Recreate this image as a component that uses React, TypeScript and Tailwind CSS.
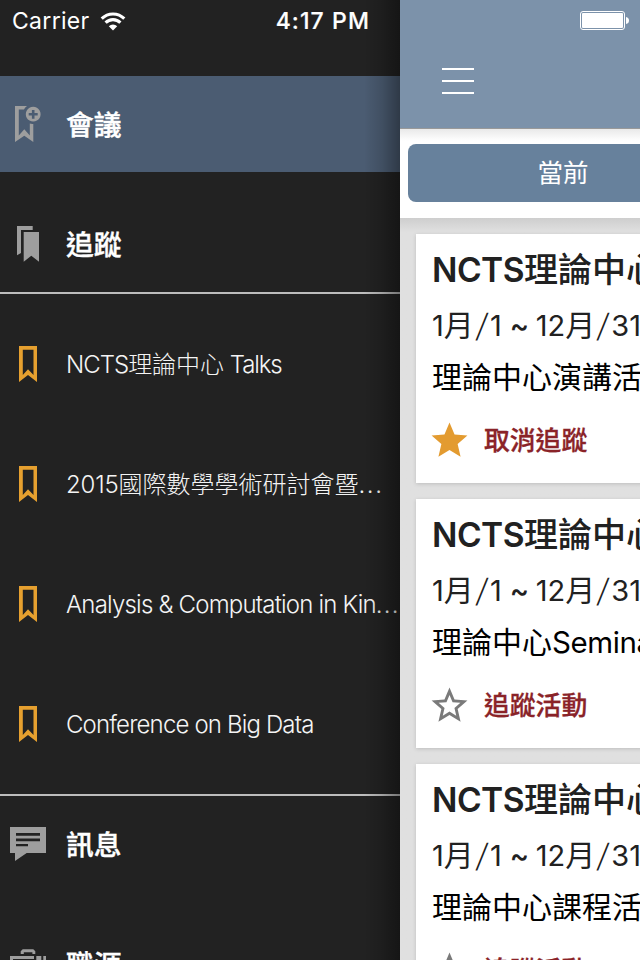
import React from "react";

const ui = "font-[Inter,'Noto_Sans_CJK_TC',sans-serif]";

function MeetingIcon() {
  return (
    <svg className="size-12 shrink-0" viewBox="0 0 48 48" fill="#9e9e9e">
      <path d="M11 6H23Q20.6 7.6 20 9.6H14.8V35.5L20.3 29.3L25.8 35.5V23.6Q27.5 24.3 29.3 24V42L20.3 35.7L11 42Z" />
      <path fillRule="evenodd" d="M29.2 6.8a7.4 7.4 0 1 0 .01 0ZM27.9 10h2.6v3h3.2v2.6h-3.2v3.2h-2.6v-3.2h-3.2V13h3.2Z" />
    </svg>
  );
}

function FollowIcon() {
  return (
    <svg className="size-12 shrink-0" viewBox="0 0 48 48" fill="#9e9e9e">
      <path d="M13 6H28.7V10H17V33L13 35.3Z" />
      <path d="M19.7 12H35V41.8L27.3 35.7L19.7 41.8Z" />
    </svg>
  );
}

function BookmarkIcon() {
  return (
    <svg className="size-12 shrink-0" viewBox="0 0 48 48" fill="#e6a02f">
      <path fillRule="evenodd" d="M15 6H33V42L24 35L15 42ZM18.8 9.8V35L24 29.3L29.5 35V9.8Z" />
    </svg>
  );
}

function MessageIcon() {
  return (
    <svg className="size-12 shrink-0" viewBox="0 0 48 48">
      <path fill="#9e9e9e" d="M6 7H42V33H22.7L11 41V33H6Z" />
      <path fill="#222" d="M12 13H36V15.7H12ZM12 18.6H36V21.3H12ZM12 24H24V26.3H12Z" />
    </svg>
  );
}

function JobIcon() {
  return (
    <svg className="size-12 shrink-0" viewBox="0 0 48 48" fill="#9e9e9e">
      <path d="M16.7 14V11.3L18.7 9.3H29.3L31.3 11.3V14H28.4V12.3H19.8V14Z" />
      <path d="M6 16H30V19H9V38H30V42H6ZM32.3 16H37.3V42H32.3ZM39.3 16H42V42H39.3Z" />
    </svg>
  );
}

function Star({ filled }: { filled?: boolean }) {
  return (
    <svg className="size-[43px] shrink-0" viewBox="0 0 24 24" fill={filled ? "#e39b30" : "#7a7a7a"}>
      {filled ? (
        <path d="M12 17.27 18.18 21l-1.64-7.03L22 9.24l-7.19-.61L12 2 9.19 8.63 2 9.24l5.46 4.73L5.82 21z" />
      ) : (
        <path d="m22 9.24-7.19-.62L12 2 9.19 8.63 2 9.24l5.46 4.73L5.82 21 12 17.27 18.18 21l-1.63-7.03zM12 15.4l-3.76 2.27 1-4.28-3.32-2.88 4.38-.38L12 6.1l1.71 4.04 4.38.38-3.32 2.88 1 4.28z" />
      )}
    </svg>
  );
}

function MenuRow({ icon, label, active }: { icon: React.ReactNode; label: string; active?: boolean }) {
  return (
    <div className={`flex h-24 shrink-0 items-center gap-3.5 pl-1 ${active ? "bg-[#4b5c72]" : ""}`}>
      {icon}
      <span className="pt-px text-[27.8px] font-medium leading-10 text-white [-webkit-text-stroke:0.4px_white]">{label}</span>
    </div>
  );
}

function TrackedRow({ children }: { children: React.ReactNode }) {
  return (
    <div className="flex h-24 shrink-0 items-center gap-3.5 pl-1">
      <BookmarkIcon />
      <span className="whitespace-nowrap pt-0.5 text-[24px] font-light leading-9 text-[#f4f4f4]">{children}</span>
    </div>
  );
}

function Slash() {
  return <span className="mx-[3px] inline-block -skew-x-10 scale-y-110 font-light">/</span>;
}

function Card({ desc, latin, action, filled }: { desc: string; latin?: string; action: string; filled?: boolean }) {
  return (
    <article className="flex h-[249px] w-[368px] shrink-0 flex-col bg-white pl-4 pt-3 shadow-[0_1px_4px_rgba(0,0,0,0.16)]">
      <h2 className="h-12 whitespace-nowrap text-[34px] font-medium leading-[48px] text-[#212121]">
        <span className="text-[33.5px] font-semibold tracking-[-0.5px]">NCTS</span>
        <span>理論中心</span>
      </h2>
      <p className="mt-[5px] h-[52px] whitespace-nowrap text-[29px] leading-[52px] text-[#212121]">
        1<span className="text-[30px]">月</span><Slash />1<span className="mx-[8px] inline-block w-[18px] font-medium">~</span>12<span className="text-[30px]">月</span><Slash />31
      </p>
      <p className="h-[52px] whitespace-nowrap text-[30px] leading-[52px] text-black">
        {desc}
        {latin && <span className="text-[29.5px] tracking-[-0.4px]">{latin}</span>}
      </p>
      <div className="mt-3 flex h-[50px] items-center">
        <div className="-ml-1"><Star filled={filled} /></div>
        <span className="ml-[13px] pt-px text-[25.8px] font-medium leading-10 text-[#8a2328] [-webkit-text-stroke:0.3px_#8a2328]">{action}</span>
      </div>
    </article>
  );
}

export default function App() {
  return (
    <div className={`flex h-[960px] w-[640px] overflow-hidden bg-[#222] ${ui}`}>
      <aside className="relative flex w-[400px] shrink-0 flex-col overflow-hidden bg-[#222]">
        <header className="flex h-[76px] shrink-0 items-start justify-between pl-3 pr-[30px] pt-1.5 text-white">
          <div className="flex items-center gap-2.5">
            <span className="text-[23px] leading-[30px] tracking-[0.3px]">Carrier</span>
            <svg className="h-[19px] w-[26px]" viewBox="0 0 26 19" fill="none" stroke="white" strokeWidth="3.1">
              <path d="M1.7 6.7a16 16 0 0 1 22.6 0" />
              <path d="M5.6 10.7a10.5 10.5 0 0 1 14.8 0" />
              <path d="M13 18.5 8.8 14.2a6 6 0 0 1 8.4 0Z" fill="white" stroke="none" />
            </svg>
          </div>
          <span className="text-[23px] font-medium leading-[30px] tracking-[1.1px] [-webkit-text-stroke:0.2px_white]">4:17 PM</span>
        </header>
        <MenuRow icon={<MeetingIcon />} label="會議" active />
        <div className="mt-6 flex flex-col"><MenuRow icon={<FollowIcon />} label="追蹤" /></div>
        <div className="flex h-[504px] shrink-0 flex-col justify-center gap-6 border-y-2 border-[#bdbdbd]">
          <TrackedRow><span className="tracking-[-1px]">NCTS</span>理論中心<span className="tracking-[-1.1px]"> Talks</span></TrackedRow>
          <TrackedRow><span className="tracking-[-0.2px]">2015</span>國際數學學術研討會暨<span className="tracking-[1.6px]">...</span></TrackedRow>
          <TrackedRow><span className="tracking-[-0.8px]">Analysis &amp; Computation in Kin</span><span className="tracking-[1.2px]">...</span></TrackedRow>
          <TrackedRow><span className="tracking-[-0.85px]">Conference on Big Data</span></TrackedRow>
        </div>
        <MenuRow icon={<MessageIcon />} label="訊息" />
        <div className="mt-6 flex flex-col"><MenuRow icon={<JobIcon />} label="職涯" /></div>
        <div className="pointer-events-none absolute inset-y-0 right-0 w-9 bg-linear-to-r from-transparent via-black/14 to-black/38" />
      </aside>

      <main className="flex w-[240px] shrink-0 flex-col overflow-hidden bg-[#e0e0e0]">
        <header className="flex h-[129px] shrink-0 flex-col border-b border-[#999] bg-[#7c92aa]">
          <div className="flex h-[68px] items-start justify-end pr-[11px] pt-[11px]">
            <svg className="h-[19px] w-[49px]" viewBox="0 0 49 19">
              <rect x=".5" y=".5" width="44" height="18" rx="2.5" fill="none" stroke="white" />
              <rect x="2" y="2" width="41" height="15" rx="1" fill="white" />
              <path d="M46 6q3 .5 3 3.5t-3 3.5Z" fill="white" />
            </svg>
          </div>
          <div className="ml-[42px] flex w-8 flex-col gap-2.5">
            <div className="h-0.5 bg-white" />
            <div className="h-0.5 bg-white" />
            <div className="h-0.5 bg-white" />
          </div>
        </header>
        <div className="h-[89px] shrink-0 bg-white bg-linear-to-b from-[#e9e9e9] to-white to-[12px] pl-2 pt-[15px]">
          <div className="flex h-[58px] w-[310px] items-center rounded-lg bg-[#67819c] pl-[129.5px] text-[25.5px] leading-9 text-white">當前</div>
        </div>
        <section className="flex h-[742px] shrink-0 flex-col gap-4 bg-[#e0e0e0] bg-linear-to-b from-[#cecece] to-[#e0e0e0] to-[14px] pl-4 pt-4">
          <Card desc="理論中心演講活動" action="取消追蹤" filled />
          <Card desc="理論中心" latin="Seminar" action="追蹤活動" />
          <Card desc="理論中心課程活動" action="追蹤活動" />
        </section>
      </main>
    </div>
  );
}
